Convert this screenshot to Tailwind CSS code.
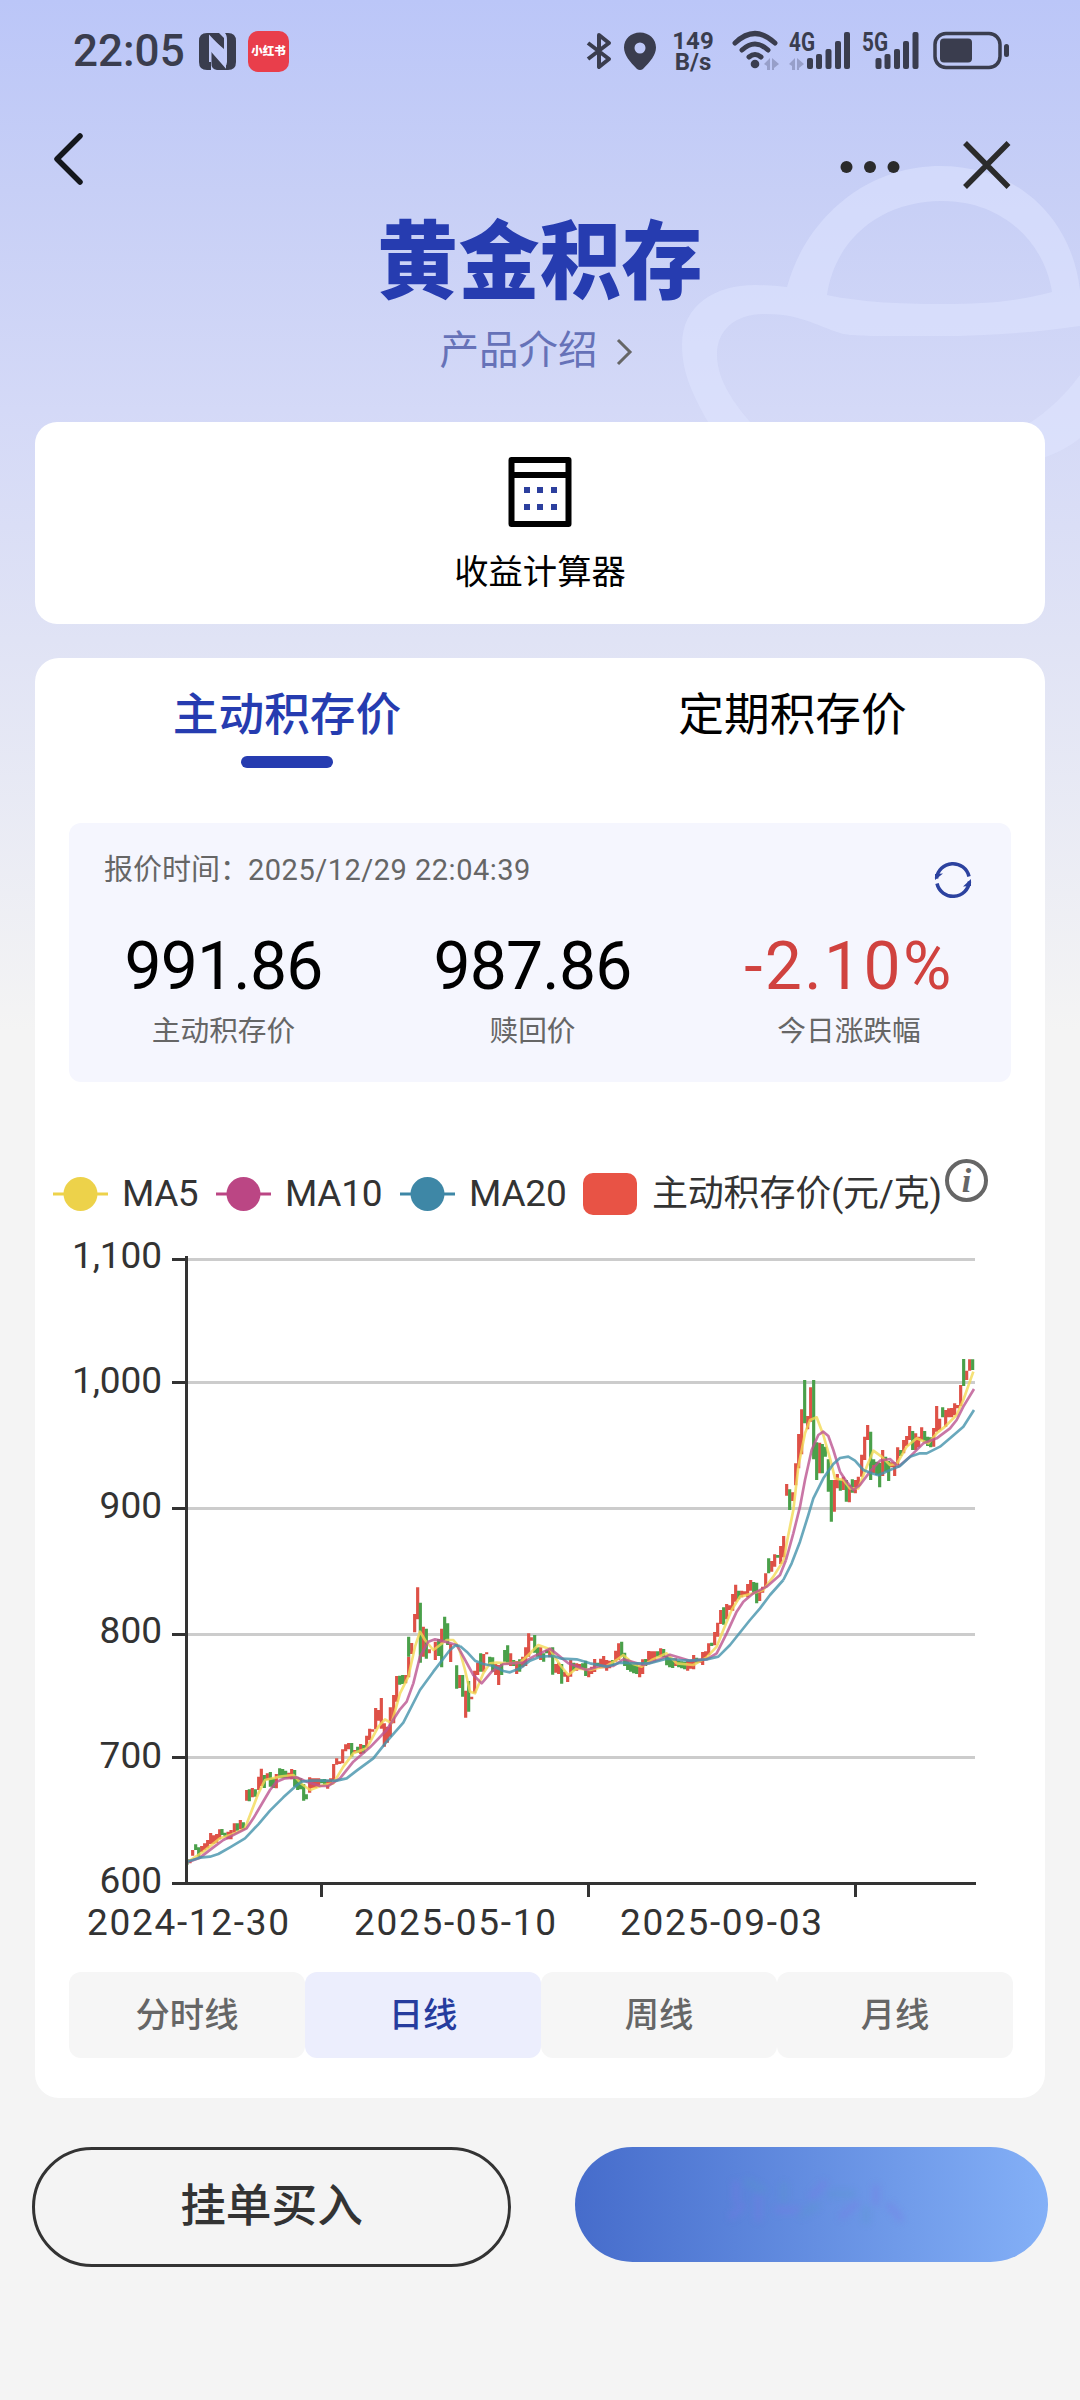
<!DOCTYPE html>
<html lang="zh-CN">
<head>
<meta charset="utf-8">
<title>黄金积存</title>
<script src="https://cdn.jsdelivr.net/npm/@tailwindcss/browser@4"></script>
</head>
<body class="bg-[#f4f4f4]">
<div class="relative w-[1080px] h-[2400px] overflow-hidden font-['Roboto','Noto_Sans_CJK_SC',sans-serif] bg-[linear-gradient(180deg,#bbc6f8_0px,#c7cff6_190px,#d4d9f7_410px,#e0e3f5_640px,#f4f4f4_1030px)]">

  <!-- decorative hat outline behind the header -->
  <svg class="absolute left-[660px] top-[150px]" width="420" height="320" viewBox="660 150 420 320" fill="#e0e6ff" fill-opacity=".5">
    <path fill-rule="evenodd" d="M708 422C690 390 682 370 682 345C682 305 715 285 755 285Q772 285 787 287C805 220 865 166 940 166C1020 166 1072 220 1080 290V326C1040 332 990 336 939 336C890 336 850 337 840 333C815 325 800 314 765 314C735 314 717 330 717 355C717 380 735 405 752 424ZM827 295C835 240 880 201 942 201C1005 201 1045 245 1052 292C1015 302 980 304 942 304C900 304 860 302 827 295Z"/>
    <path d="M1080 375C1065 395 1050 410 1028 424L1043 458C1060 452 1070 446 1080 438Z"/>
  </svg>

  <!-- status bar -->
  <header class="relative flex h-[102px] text-[#3a3d4e]">
    <div class="ml-[73px] mt-[26px] w-[126px] text-[44px] leading-[50px] font-medium">22:05</div>
    <svg class="mt-[32px]" width="38" height="39" viewBox="0 0 38 39">
      <path fill="#3a3d4e" d="M8 1H20L25 6V17L12 6V30Q12 36 12 38H8Q0 38 0 30V9Q0 1 8 1ZM26 1H29Q37 1 37 9V30Q37 38 29 38H18Q12 37 12.500 31V18L26 34Q28 33 28 30V8Q28 3 26 1Z"/>
      <path d="M11 30V5L26 21V34L12 18" fill="none" stroke="#c1caf8" stroke-width="2"/>
    </svg>
    <div class="ml-[11px] mt-[31px] flex h-[41px] w-[41px] items-center justify-center rounded-[10px] bg-[#e93e4b] text-[11.5px] font-black text-white">小红书</div>

    <svg class="ml-[297px] mt-[31px]" width="27" height="40" viewBox="0 0 27 40" fill="none" stroke="#3a3d4e" stroke-width="4" stroke-linejoin="round">
      <path d="M2 12L23 28L13 36V4L23 12L2 28"/>
    </svg>
    <svg class="ml-[11px] mt-[32px]" width="32" height="38" viewBox="0 0 32 38">
      <path fill="#3a3d4e" fill-rule="evenodd" d="M16 .5C7 .5 0 7 0 15.500C0 23 6 30 13 37Q16 39 19 37C26 30 32 23 32 15.500C32 7 25 .5 16 .5ZM16 10.500A5.500 5.500 0 1 1 16 21.500A5.500 5.500 0 1 1 16 10.500Z"/>
    </svg>
    <div class="ml-[14px] mt-[31px] w-[46px] text-center text-[24px] leading-[21px] font-bold"><div>149</div><div>B/s</div></div>
    <svg class="ml-[16px] mt-[30px]" width="48" height="42" viewBox="0 0 48 42" fill="none" stroke="#3a3d4e" stroke-width="5" stroke-linecap="round">
      <path d="M3 13Q23 -6 43 13M10 20Q23 8 36 20M17 27Q23 22 29 27"/>
      <circle cx="23" cy="34" r="4.300" fill="#3a3d4e" stroke="none"/>
      <path fill="#979fc9" stroke="none" d="M32 34L38 28V40H35V36ZM40 28L47 34L42 38V40H40Z"/>
    </svg>
    <svg class="ml-[8px] mt-[30px] overflow-visible" width="64" height="42" viewBox="0 0 64 42" fill="#3a3d4e">
      <text x="1" y="21" font-size="25" font-weight="700" textLength="26" lengthAdjust="spacingAndGlyphs">4G</text>
      <path fill="#979fc9" d="M1 34L7 28V40H4V36ZM9 28L16 34L11 38V40H9Z"/>
      <rect x="19" y="28" width="6" height="11" rx="2"/><rect x="28" y="24" width="6" height="15" rx="2"/><rect x="37.500" y="19" width="6" height="20" rx="2"/><rect x="47" y="11" width="6" height="28" rx="2"/><rect x="56" y="2" width="6" height="37" rx="2"/>
    </svg>
    <svg class="ml-[9px] mt-[30px] overflow-visible" width="60" height="42" viewBox="0 0 60 42" fill="#3a3d4e">
      <text x="1" y="21" font-size="25" font-weight="700" textLength="26" lengthAdjust="spacingAndGlyphs">5G</text>
      <rect x="14.500" y="28" width="6" height="11" rx="2"/><rect x="23.500" y="24" width="6" height="15" rx="2"/><rect x="33" y="19" width="6" height="20" rx="2"/><rect x="42" y="11" width="6" height="28" rx="2"/><rect x="51.500" y="2" width="6" height="37" rx="2"/>
    </svg>
    <svg class="ml-[12px] mt-[31px]" width="78" height="39" viewBox="0 0 78 39">
      <rect x="2" y="2.500" width="65" height="34" rx="11" fill="none" stroke="#3a3d4e" stroke-width="3.500"/>
      <rect x="7" y="7.500" width="32" height="24" rx="4" fill="#3a3d4e"/><rect x="71" y="13" width="5" height="13" rx="2.500" fill="#3a3d4e"/>
    </svg>
  </header>

  <!-- navigation -->
  <nav class="relative flex h-[98px]">
    <svg class="ml-[49px] mt-[26px]" width="40" height="62" viewBox="0 0 40 62" fill="none" stroke="#14171c" stroke-width="5.500" stroke-linecap="round" stroke-linejoin="round"><path d="M31 8L8 31L31 54"/></svg>
    <svg class="ml-[751px] mt-[58px]" width="60" height="14" viewBox="0 0 60 14" fill="#2b2b2b"><circle cx="6.500" cy="7" r="6"/><circle cx="30" cy="7" r="6"/><circle cx="53.500" cy="7" r="6"/></svg>
    <svg class="ml-[61px] mt-[37px]" width="52" height="52" viewBox="0 0 52 52" fill="none" stroke="#2b2b2b" stroke-width="5.500"><path d="M4 4L47.500 48M47.500 4L4 48"/></svg>
  </nav>

  <section class="relative flex h-[222px] flex-col items-center">
    <h1 class="mt-[7px] scale-y-[1.05] font-['Noto_Sans_CJK_SC',sans-serif] text-[81px] leading-[96px] font-black tracking-[0.5px] text-[#263cb0]">黄金积存</h1>
    <div class="mt-[23px] mr-[7px] flex items-center text-[39.500px] leading-[50px] text-[#6672b8]">
      <span>产品介绍</span>
      <svg class="ml-[18px] mt-[2px]" width="18" height="30" viewBox="0 0 18 30" fill="none" stroke="#666" stroke-width="3"><path d="M2 3L14 15L2 27"/></svg>
    </div>
  </section>

  <!-- calculator shortcut -->
  <section class="relative mx-[35px] flex h-[202px] flex-col items-center rounded-[22px] bg-white">
    <svg class="mt-[34px]" width="64" height="72" viewBox="0 0 64 72">
      <path fill="none" stroke="#000" stroke-width="6" stroke-linejoin="round" d="M3.500 4H60.500V68H3.500ZM3.500 19H60.500"/>
      <path fill="#2c3f9e" d="M16 31h6v6h-6zM29 31h6v6h-6zM43 31h6v6h-6zM16 48h6v6h-6zM29 48h6v6h-6zM43 48h6v6h-6z"/>
    </svg>
    <div class="mt-[22px] text-[34.300px] leading-[44px] text-black">收益计算器</div>
  </section>

  <!-- price card -->
  <section class="relative mx-[35px] mt-[34px] h-[1440px] rounded-[24px] bg-white">
    <div class="grid h-[165px] grid-cols-2 text-[45.700px] leading-[60px]">
      <div class="flex flex-col items-center font-medium text-[#263cb0]"><span class="mt-[28px] mr-[1px]">主动积存价</span><i class="mt-[10px] mr-[2px] h-[12px] w-[92px] rounded-full bg-[#263cb0]"></i></div>
      <div class="flex flex-col items-center text-black"><span class="mt-[28px]">定期积存价</span></div>
    </div>

    <div class="mx-[34px] h-[259px] rounded-[12px] bg-[#f5f6fe]">
      <div class="flex h-[104px] justify-between pl-[35px] pr-[38px] text-[29px] text-[#666]">
        <div class="mt-[29px] leading-[36px] whitespace-nowrap">报价时间：<span class="ml-[-1px] tracking-[0.5px]">2025/12/29 22:04:39</span></div>
        <svg class="mt-[37px]" width="40" height="40" viewBox="0 0 40 40" fill="none" stroke="#2c429f" stroke-width="3.500">
          <path d="M3.500 18.500A16.500 16.500 0 0 1 36 16.500M36.500 21.500A16.500 16.500 0 0 1 4 23.500"/>
          <path fill="#2c429f" stroke="none" d="M2 20V14L10 13.500ZM38 19V26L30 26.500Z"/>
        </svg>
      </div>
      <div class="grid grid-cols-[309px_309px_324px] text-center">
        <div><div class="mt-[4px] text-[66px] leading-[72px] tracking-[-0.8px] text-black">991.86</div><div class="mt-[8px] text-[28.700px] leading-[40px] text-[#666]">主动积存价</div></div>
        <div><div class="mt-[4px] text-[66px] leading-[72px] tracking-[-0.8px] text-black">987.86</div><div class="mt-[8px] text-[28.700px] leading-[40px] text-[#666]">赎回价</div></div>
        <div><div class="mt-[4px] text-[66px] leading-[72px] tracking-[2.400px] text-[#d0423f]">-2.10%</div><div class="mt-[8px] text-[28.700px] leading-[40px] text-[#666]">今日涨跌幅</div></div>
      </div>
    </div>

    <!-- chart legend -->
    <div class="flex h-[148px] items-start pt-[87px] pl-[18px] text-[37px] leading-[50px] whitespace-nowrap text-[#333]">
      <svg class="mt-[7px]" width="55" height="36" viewBox="0 0 55 36"><path d="M0 18H55" stroke="#edd24a" stroke-width="3"/><circle cx="27.500" cy="18" r="17" fill="#edd24a"/></svg>
      <span class="ml-[14px] w-[94px] tracking-[-0.5px]">MA5</span>
      <svg class="mt-[7px]" width="55" height="36" viewBox="0 0 55 36"><path d="M0 18H55" stroke="#bb4684" stroke-width="3"/><circle cx="27.500" cy="18" r="17" fill="#bb4684"/></svg>
      <span class="ml-[14px] w-[115px] tracking-[-0.3px]">MA10</span>
      <svg class="mt-[7px]" width="55" height="36" viewBox="0 0 55 36"><path d="M0 18H55" stroke="#3e87a6" stroke-width="3"/><circle cx="27.500" cy="18" r="17" fill="#3e87a6"/></svg>
      <span class="ml-[14px] w-[114px] tracking-[-0.2px]">MA20</span>
      <i class="mt-[4px] h-[42px] w-[54px] rounded-[10px] bg-[#e85345]"></i>
      <span class="ml-[15px] w-[292px] text-[36px] tracking-[-0.2px]">主动积存价(元/克)</span>
      <span class="mt-[-10px] ml-[1px] flex h-[43px] w-[43px] items-center justify-center rounded-full border-[4px] border-[#666] font-['Liberation_Serif',serif] text-[34px] leading-[36px] font-bold text-[#666] italic">i</span>
    </div>

    <!-- candlestick chart: bars and lines use thirds of a pixel -->
    <svg class="block" width="1010" height="720" viewBox="35 1230 1010 720" fill="none">
      <path stroke="#ccc" stroke-width="3" d="M188 1259.500H975M188 1382.500H975M188 1508.500H975M188 1634.500H975M188 1757.500H975"/>
      <g font-size="37" fill="#333" text-anchor="end">
        <text x="162" y="1268" textLength="90">1,100</text><text x="162" y="1393" textLength="90">1,000</text><text x="162" y="1518">900</text><text x="162" y="1643">800</text><text x="162" y="1768">700</text><text x="162" y="1893">600</text>
      </g>
      <g font-size="37" fill="#333">
        <text x="87" y="1935" textLength="202">2024-12-30</text><text x="354" y="1935" textLength="202">2025-05-10</text><text x="620" y="1935" textLength="202">2025-09-03</text>
      </g>
      <g transform="translate(170 1560) scale(.33333)" stroke-width="9.500">
        <path stroke="#de5147" d="M60 898V910M68 870V887M95 858V876M104 850V870M113 840V865M122 819V852M131 826V852M140 822V848M149 808V838M174 815V838M183 810V838M193 790V818M211 780V808M230 690V722M247 684V712M266 650V690M274 626V678M292 640V660M319 642V685M356 638V655M365 627V658M419 652V698M428 655V684M437 655V684M446 655V680M473 660V686M482 655V675M491 612V662M500 595V614M509 604V612M518 568V610M527 553V574M536 549V568M554 570V578M572 552V582M590 527V565M599 506V540M608 508V515M617 444V508M626 450V482M634 414V506M643 490V560M652 500V548M661 442V530M671 405V490M680 348V425M707 345V370M716 290V352M725 249V282M734 162V217M743 82V178M760 200V290M778 268V280M796 245V300M815 206V250M842 252V306M869 345V384M887 392V473M905 410V418"/>
        <path stroke="#4aa04a" d="M51 898V914M77 853V870M86 862V890M156 807V825M165 818V830M202 790V812M220 787V810M238 688V724M256 688V710M283 645V684M301 636V680M310 655V684M329 625V655M338 627V655M347 632V655M374 630V680M383 652V690M392 655V688M401 672V722M409 703V718M455 658V670M464 657V675M545 549V590M563 560V578M581 555V580M689 347V374M698 345V372M716 230V290M751 128V308M769 206V296M806 237V288M815 250V322M824 170V242M833 190V255M860 316V386M878 345V410M896 363V455"/>
      </g>
      <g transform="translate(460 1560) scale(.33333)" stroke-width="9.500">
        <path stroke="#de5147" d="M44 332V400M53 308V345M71 282V335M80 277V283M107 312V345M116 315V375M152 280V318M170 303V342M188 290V322M197 262V318M206 220V290M214 232V242M242 262V300M269 265V292M287 312V338M296 308V342M314 335V350M323 344V366M332 300V350M350 310V332M359 312V328M386 332V352M395 320V342M404 297V336M422 296V325M431 288V325M440 300V332M449 302V325M467 272V305M476 250V300M539 318V352M548 298V342M566 273V305M575 274V302M584 274V302M602 265V290M647 295V318M683 303V332M692 300V326M701 285V328M719 296V308M728 276V315M737 274V296M746 250V286M764 216V256M773 188V230M782 150V192M800 132V178M809 136V150M818 102V152M827 74V125M845 92V112M854 94V105M863 72V112M872 60V92M899 90V123M908 80V98"/>
        <path stroke="#4aa04a" d="M62 280V335M89 290V315M98 292V335M125 310V345M134 270V305M143 256V312M161 300V318M179 298V335M224 225V278M233 262V290M251 280V305M260 270V280M278 262V344M305 312V371M341 308V332M368 310V325M377 302V348M413 308V318M458 300V318M485 245V290M494 278V318M503 296V330M512 308V335M521 312V340M530 310V342M557 297V318M593 274V290M611 267V292M620 288V316M629 292V322M638 295V324M656 302V322M665 304V325M674 305V328M710 293V310M755 248V258M791 142V194M836 92V118M881 66V98M890 68V130"/>
      </g>
      <g transform="translate(690 1330) scale(.33333)" stroke-width="9.500">
        <path stroke="#de5147" d="M227 730V772M245 693V725M254 673V710M272 648V702M281 618V682M290 462V497M308 487V513M317 400V466M326 312V415M335 238V373M353 258V298M362 172V275M389 338V430M433 450V545M442 432V475M460 440V480M478 465V517M496 450V490M505 440V470M515 374V440M524 320V390M533 285V330M551 400V430M578 360V438M605 397V412M614 397V438M623 352V405M641 330V370M650 318V348M659 288V330M677 310V360M686 320V352M695 292V330M731 294V350M740 228V305M749 266V300M767 240V290M776 235V262M785 234V262M794 220V256M803 225V235M812 165V228M830 122V150M839 88V122"/>
        <path stroke="#4aa04a" d="M236 685V730M263 675V683M299 478V540M344 150V280M371 150V388M380 337V450M397 342V430M406 350V380M415 388V485M424 450V575M451 450V482M469 450V515M487 448V488M542 305V450M551 388V405M560 395V435M569 398V472M587 380V425M596 393V453M632 360V378M668 303V360M704 303V335M713 320V348M722 322V352M758 232V262M821 87V168M848 88V120"/>
      </g>
      <g stroke-width="8" stroke-linejoin="round" stroke-opacity=".8">
        <g transform="translate(170 1560) scale(.33333)">
          <path stroke="#f3d955" d="M55 905L100 875L150 835L190 822L225 805L265 700L285 660L330 650L370 645L395 672L420 690L460 675L490 670L520 620L550 580L590 565L625 500L645 478L665 490L690 400L715 350L735 260L750 215L765 240L790 270L830 240L850 240L860 252L870 275"/>
          <path stroke="#bb5490" d="M55 906L90 893L130 862L160 840L230 805L250 775L300 690L320 665L345 655L380 652L410 665L450 678L475 678L510 655L550 605L600 562L650 510L690 448L710 425L730 370L750 290L775 245L795 238L825 245L860 255L870 272"/>
          <path stroke="#4492ab" d="M50 905L90 893L120 890L145 882L180 862L225 835L265 793L300 752L340 712L375 680L395 665L420 662L500 662L530 655L560 632L610 595L650 545L700 488L750 390L790 335L840 270L857 256L870 258"/>
        </g>
        <g transform="translate(460 1560) scale(.33333)">
          <path stroke="#f3d955" d="M0 275L15 330L30 395L45 400L70 340L90 310L110 308L140 310L180 308L205 285L235 255L270 268L300 315L325 345L350 325L390 330L440 318L470 300L490 285L520 312L545 320L575 300L620 280L650 310L700 315L740 292L770 260L790 210L815 150L840 110L880 100L910 90L940 50L965 10L972 0"/>
          <path stroke="#bb5490" d="M0 272L40 345L65 370L95 335L130 312L190 308L220 290L270 266L300 290L325 310L380 330L420 318L460 318L490 298L550 315L600 298L630 284L690 302L740 298L770 280L800 220L830 155L850 125L880 100L920 80L960 45L978 0"/>
          <path stroke="#4492ab" d="M0 258L20 275L45 302L70 312L100 318L130 333L150 337L180 325L210 302L240 290L280 288L305 296L350 298L390 310L440 320L480 308L520 310L570 310L620 296L660 300L690 302L740 298L775 290L810 255L870 180L900 145L930 105L970 60"/>
        </g>
        <g transform="translate(690 1330) scale(.33333)">
          <path stroke="#f3d955" d="M282 690L290 640L310 540L325 410L345 310L360 270L380 262L400 315L420 385L435 445L460 450L480 475L505 475L530 410L550 362L575 380L600 405L620 402L650 350L680 325L715 340L740 310L765 290L800 255L820 210L850 125"/>
          <path stroke="#bb5490" d="M288 690L310 610L330 530L345 450L365 360L385 315L400 305L415 318L430 360L450 425L470 455L490 480L510 465L540 425L570 392L600 387L625 410L660 380L700 340L740 325L780 295L800 270L820 230L852 177"/>
          <path stroke="#4492ab" d="M280 750L305 700L330 635L355 555L370 505L400 445L430 402L450 384L475 380L495 392L520 420L545 430L565 436L600 420L630 408L660 380L690 370L710 370L750 350L780 325L820 290L852 240"/>
        </g>
      </g>
      <path stroke="#333" stroke-width="3" d="M186.500 1256V1883M172 1259.500H187M172 1382.500H187M172 1508.500H187M172 1634.500H187M172 1757.500H187M172 1883.500H976M321.500 1883V1897M588.500 1883V1897M855.500 1883V1897"/>
    </svg>

    <!-- period switch -->
    <div class="mx-[34px] mt-[22px] grid h-[86px] w-[944px] grid-cols-4 text-center text-[34.300px] leading-[86px] font-medium text-[#666]">
      <div class="rounded-[12px] bg-[#f6f6f6]">分时线</div>
      <div class="rounded-[12px] bg-[#eceefd] text-[#263c9e]">日线</div>
      <div class="rounded-[12px] bg-[#f6f6f6]">周线</div>
      <div class="rounded-[12px] bg-[#f6f6f6]">月线</div>
    </div>
  </section>

  <!-- actions -->
  <footer class="relative mt-[49px] flex pl-[32px]">
    <button class="h-[120px] w-[479px] rounded-full border-[3px] border-[#333] text-[45.700px] leading-[112px] font-medium text-[#333]">挂单买入</button>
    <div class="ml-[64px] flex h-[115px] w-[473px] items-center justify-center rounded-full bg-linear-to-r from-[#466ccb] to-[#84b0f7]">
      <svg class="mb-[6px] ml-[8px] blur-[3px]" width="184" height="52" viewBox="0 0 184 52" fill="none" stroke-width="8" stroke-opacity=".28" stroke-linecap="round">
        <path stroke="#7a78e6" d="M12 8V24M8 40L18 30M34 22V42M54 34H74M100 8L88 20M118 40L132 28M152 12V26M166 30L176 42"/>
        <path stroke="#5598c8" d="M24 6L38 14M60 10V22M78 38L92 30M108 18H128M142 34V44"/>
      </svg>
    </div>
  </footer>
</div>
</body>
</html>
